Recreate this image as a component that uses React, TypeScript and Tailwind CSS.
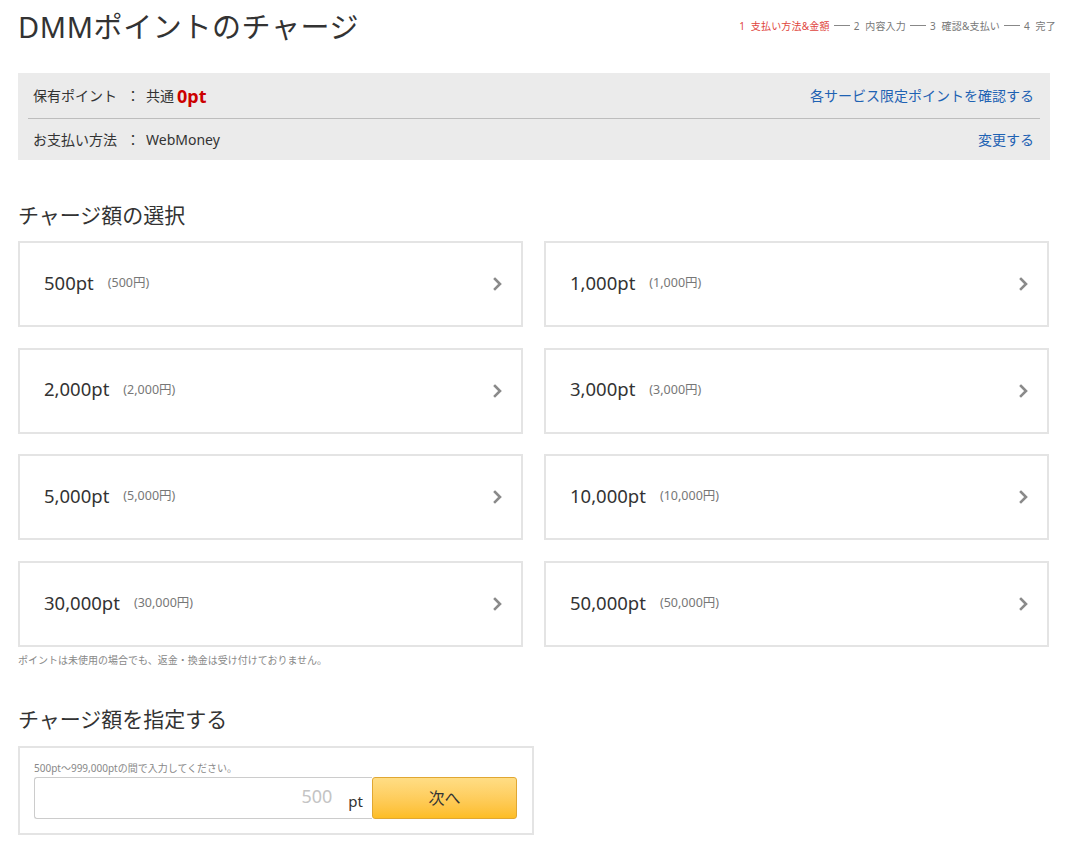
import React from "react";

const amounts = [
  ["500pt", "(500円)"],
  ["1,000pt", "(1,000円)"],
  ["2,000pt", "(2,000円)"],
  ["3,000pt", "(3,000円)"],
  ["5,000pt", "(5,000円)"],
  ["10,000pt", "(10,000円)"],
  ["30,000pt", "(30,000円)"],
  ["50,000pt", "(50,000円)"],
];

function Chevron() {
  return (
    <svg width="10" height="14" viewBox="0 0 10 14" className="shrink-0">
      <polyline points="2,2 7,7 2,12" fill="none" stroke="#8a8a8a" strokeWidth="2.6" strokeLinecap="square" />
    </svg>
  );
}

function Line() {
  return <span className="inline-block w-[16px] h-0 border-t border-[#888] mx-[4px] relative -top-[1px]" />;
}

export default function App() {
  return (
    <div
      className="w-[1076px] min-h-[857px] bg-white px-[18px] text-[#333]"
      style={{ fontFamily: '"Noto Sans", "Noto Sans CJK JP", sans-serif' }}
    >
      <div className="w-[1032px] flex items-center justify-between h-[52px]">
        <h1 className="text-[29px] leading-none tracking-[0.6px] text-[#333]">DMMポイントのチャージ</h1>
        <div className="text-[10px] leading-none text-[#777] mr-[-6px] flex items-center whitespace-pre tracking-[0.2px]">
          <span className="text-[#e0463e]">1{"\u00a0\u00a0"}支払い方法&amp;金額</span>
          <Line />
          <span>2{"\u00a0\u00a0"}内容入力</span>
          <Line />
          <span>3{"\u00a0\u00a0"}確認&amp;支払い</span>
          <Line />
          <span>4{"\u00a0\u00a0"}完了</span>
        </div>
      </div>

      <div className="mt-[21px] w-[1032px] bg-[#ebebeb] px-[10px] text-[14px]">
        <div className="h-[45px] flex items-center justify-between px-[5px]">
          <div className="flex items-center">
            <span className="w-[93px]">保有ポイント</span>
            <span className="w-[20px]">：</span>
            <span>共通</span>
            <span className="ml-[3px] text-[18px] font-bold text-[#cc0000] leading-none">0pt</span>
          </div>
          <span className="text-[#1e62b3] mr-[1px]">各サービス限定ポイントを確認する</span>
        </div>
        <div className="h-px bg-[#bdbdbd]" />
        <div className="h-[41px] flex items-center justify-between px-[5px]">
          <div className="flex items-center">
            <span className="w-[93px]">お支払い方法</span>
            <span className="w-[20px]">：</span>
            <span>WebMoney</span>
          </div>
          <span className="text-[#1e62b3] mr-[1px]">変更する</span>
        </div>
      </div>

      <h2 className="mt-[40px] h-[30px] flex items-center text-[21px] leading-none font-normal">チャージ額の選択</h2>

      <div className="mt-[11px] w-[1031px] grid grid-cols-2 gap-x-[21px] gap-y-[20.67px]">
        {amounts.map(([pt, yen]) => (
          <div
            key={pt}
            className="h-[86px] border-2 border-[#e4e4e4] bg-white flex items-center justify-between pl-[24px] pr-[18px]"
          >
            <div className="flex items-center mt-[-3px]">
              <span className="text-[18.5px] text-[#333]">{pt}</span>
              <span className="ml-[14px] text-[12.5px] text-[#777] mt-[2px]">{yen}</span>
            </div>
            <Chevron />
          </div>
        ))}
      </div>

      <p className="mt-[6px] h-[14px] text-[10px] leading-[14px] text-[#888]">
        ポイントは未使用の場合でも、返金・換金は受け付けておりません。
      </p>

      <h2 className="mt-[38px] h-[30px] flex items-center text-[21px] leading-none font-normal">チャージ額を指定する</h2>

      <div className="mt-[11px] w-[516px] h-[89px] border-2 border-[#e4e4e4] px-[14px] pt-[14px]">
        <p className="text-[10px] leading-[12px] text-[#888]">500pt〜999,000ptの間で入力してください。</p>
        <div className="mt-[3px] flex h-[42px]">
          <div className="w-[338px] border border-[#cccccc] border-r-0 rounded-l-[3px] flex items-center justify-end">
            <span className="text-[18px] text-[#c4c4c4] mr-[16px] mt-[-2px]">500</span>
            <span className="text-[15px] text-[#333] mr-[9px] mt-[6px]">pt</span>
          </div>
          <button className="w-[145px] rounded-[3px] border border-[#e0a732] bg-gradient-to-b from-[#ffdd84] to-[#fdbd22] text-[16px] text-[#333] flex items-center justify-center">
            次へ
          </button>
        </div>
      </div>
    </div>
  );
}
